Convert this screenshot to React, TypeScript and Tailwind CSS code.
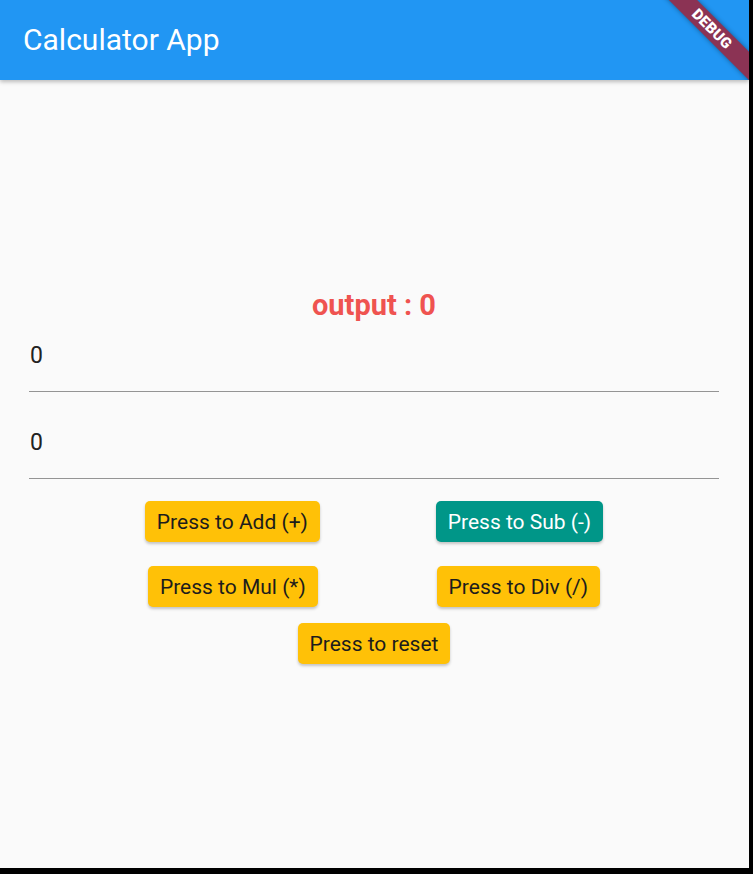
import React from 'react';

const font = "font-['Roboto','Noto_Sans',sans-serif]";

function Field({ value, top }: { value: string; top: string }) {
  return (
    <div className={`${top} pb-[22px] border-b border-[#949494]`}>
      <div className="text-[23px] leading-[26px] text-[#222222] pl-[1px]">{value}</div>
    </div>
  );
}

function Btn({ label, teal }: { label: string; teal?: boolean }) {
  return (
    <button
      className={`h-[41px] px-[12px] rounded-[5px] text-[21px] leading-[24px] shadow-[0_2px_3px_rgba(0,0,0,0.22)] ${
        teal ? 'bg-[#009688] text-white' : 'bg-[#ffc107] text-[#1c1c1c]'
      }`}
    >
      {label}
    </button>
  );
}

export default function App() {
  return (
    <div className={`w-[753px] h-[874px] bg-black ${font}`}>
      <div className="relative w-[749px] h-[868px] bg-[#fafafa] overflow-hidden">
        {/* App bar */}
        <header className="relative z-10 h-[80px] bg-[#2196f3] flex items-center pl-[23px] shadow-[0_2px_4px_rgba(0,0,0,0.25)]">
          <h1 className="text-white text-[30px] leading-[36px]">Calculator App</h1>
        </header>

        {/* Debug banner */}
        <div className="absolute top-0 right-0 w-[100px] h-[80px] overflow-hidden z-20 pointer-events-none">
          <div className="absolute left-[-17px] top-[19px] w-[160px] h-[20px] rotate-45 bg-[#8b3354] shadow-[0_0_5px_rgba(0,0,0,0.4)] flex items-center justify-center">
            <span className="text-white text-[15px] font-black leading-none tracking-[0.3px]">DEBUG</span>
          </div>
        </div>

        {/* Body */}
        <main className="pt-[208px] pl-[29px] pr-[30px]">
          <div className="text-center text-[29px] leading-[34px] font-bold text-[#ef5350]">output : 0</div>

          <Field value="0" top="pt-[21px]" />
          <Field value="0" top="pt-[38px]" />

          <div className="mt-[22px] flex justify-evenly">
            <Btn label="Press to Add (+)" />
            <Btn label="Press to Sub (-)" teal />
          </div>
          <div className="mt-[24px] flex justify-evenly">
            <Btn label="Press to Mul (*)" />
            <Btn label="Press to Div (/)" />
          </div>
          <div className="mt-[16px] flex justify-center">
            <Btn label="Press to reset" />
          </div>
        </main>
      </div>
    </div>
  );
}
